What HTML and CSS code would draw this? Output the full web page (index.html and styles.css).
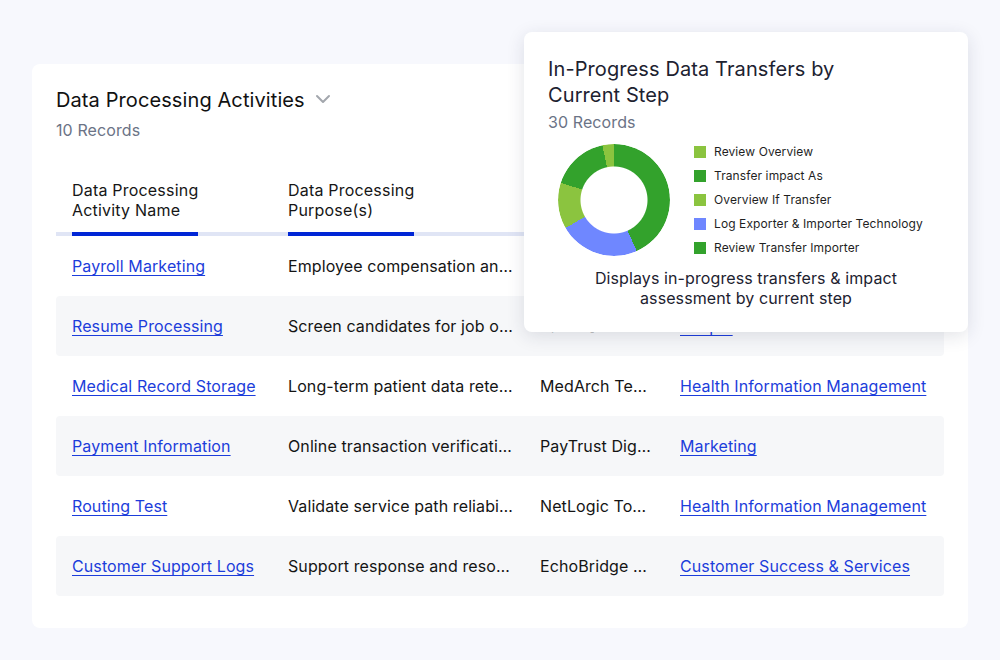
FILE: index.html
```html
<!DOCTYPE html>
<html lang="en">
<head>
  <meta charset="UTF-8">
  <title>Data Processing Activities</title>
  <link rel="stylesheet" href="styles.css">
</head>
<body>

<div class="page">
  <div class="card">
    <div class="card-title">
      <span>Data Processing Activities</span>
      <svg class="chevron" width="16" height="10" viewBox="0 0 16 10"><path d="M2 2 L8 8 L14 2" fill="none" stroke="#a3a7ad" stroke-width="2" stroke-linecap="round" stroke-linejoin="round"/></svg>
    </div>
    <div class="records">10 Records</div>

    <div class="table">
      <div class="row head">
        <div class="cell c1"><span class="th">Data Processing<br>Activity Name</span></div>
        <div class="cell c2"><span class="th">Data Processing<br>Purpose(s)</span></div>
        <div class="cell c3"><span class="th">Vendor(s)</span></div>
        <div class="cell c4"><span class="th">Department(s)</span></div>
      </div>

      <div class="row">
        <div class="cell c1"><a href="#">Payroll Marketing</a></div>
        <div class="cell c2">Employee compensation and benefits</div>
        <div class="cell c3">PayCore Systems</div>
        <div class="cell c4"><a href="#">Human Resources</a></div>
      </div>
      <div class="row striped">
        <div class="cell c1"><a href="#">Resume Processing</a></div>
        <div class="cell c2">Screen candidates for job openings</div>
        <div class="cell c3">TalentSource Inc</div>
        <div class="cell c4"><a href="#">People</a></div>
      </div>
      <div class="row">
        <div class="cell c1"><a href="#">Medical Record Storage</a></div>
        <div class="cell c2">Long-term patient data retention</div>
        <div class="cell c3">MedArch Technologies</div>
        <div class="cell c4"><a href="#">Health Information Management</a></div>
      </div>
      <div class="row striped">
        <div class="cell c1"><a href="#">Payment Information</a></div>
        <div class="cell c2">Online transaction verification</div>
        <div class="cell c3">PayTrust Digital</div>
        <div class="cell c4"><a href="#">Marketing</a></div>
      </div>
      <div class="row">
        <div class="cell c1"><a href="#">Routing Test</a></div>
        <div class="cell c2">Validate service path reliability</div>
        <div class="cell c3">NetLogic Tools</div>
        <div class="cell c4"><a href="#">Health Information Management</a></div>
      </div>
      <div class="row striped">
        <div class="cell c1"><a href="#">Customer Support Logs</a></div>
        <div class="cell c2">Support response and resolution tracking</div>
        <div class="cell c3">EchoBridge Support</div>
        <div class="cell c4"><a href="#">Customer Success &amp; Services</a></div>
      </div>
    </div>
  </div>

  <!-- chart popup over the table -->
  <div class="popup">
    <div class="popup-title">In-Progress Data Transfers by<br>Current Step</div>
    <div class="popup-records">30 Records</div>
    <div class="chart">
      <div class="donut"></div>
      <ul class="legend">
        <li><span class="swatch light"></span>Review Overview</li>
        <li><span class="swatch dark"></span>Transfer impact As</li>
        <li><span class="swatch light"></span>Overview If Transfer</li>
        <li><span class="swatch blue"></span>Log Exporter &amp; Importer Technology</li>
        <li><span class="swatch dark"></span>Review Transfer Importer</li>
      </ul>
    </div>
    <p class="caption">Displays in-progress transfers &amp; impact<br>assessment by current step</p>
  </div>
</div>

</body>
</html>
```

FILE: styles.css
```css
* {
  box-sizing: border-box;
}

body {
  margin: 0;
  background: #f7f8fd;
  font-family: Inter, "Noto Sans", sans-serif;
  letter-spacing: 0.1px;
  color: #141414;
}

.page {
  position: relative;
  width: 1000px;
  height: 660px;
  padding: 64px 32px 32px;
}

.card {
  background: #fff;
  border-radius: 8px;
  height: 564px;
  padding: 24px 24px 32px;
}

.card-title {
  display: flex;
  align-items: center;
  gap: 10px;
  font-size: 20px;
  line-height: 24px;
  color: #111;
}

.chevron {
  margin-top: -2px;
}

.records {
  margin-top: 8px;
  font-size: 16px;
  line-height: 20px;
  color: #6b7386;
}

/* Table */
.table {
  margin-top: 40px;
  width: 888px;
}

.row {
  display: flex;
  height: 60px;
  align-items: center;
  font-size: 16px;
  line-height: 20px;
}

.row.striped {
  background: #f6f7f9;
  border-radius: 4px;
}

.row.head {
  height: auto;
  align-items: stretch;
  border-bottom: 4px solid #e0e5f5;
}

.cell {
  padding: 0 11px 0 16px;
  white-space: nowrap;
  overflow: hidden;
  text-overflow: ellipsis;
}

.head .cell {
  display: flex;
  flex-direction: column;
  overflow: visible;
}

.th {
  align-self: flex-start;
  padding-bottom: 12px;
  margin-bottom: -4px;
  border-bottom: 4px solid #0026d6;
  letter-spacing: 0.2px;
  color: #161616;
}

.c1 { width: 216px; }
.c2 { width: 252px; }
.c3 { width: 140px; }
.c4 { width: 280px; }

.cell a {
  color: #1c3ddb;
  text-decoration: underline;
  text-underline-offset: 3px;
  text-decoration-thickness: 1px;
}

/* Chart popup */
.popup {
  position: absolute;
  left: 524px;
  top: 32px;
  width: 444px;
  height: 300px;
  background: #fff;
  border-radius: 8px;
  box-shadow: 0 4px 18px rgba(30, 40, 70, 0.13);
  padding: 24px;
}

.popup-title {
  font-size: 20px;
  line-height: 26px;
  color: #1d2230;
}

.popup-records {
  margin-top: 4px;
  font-size: 16px;
  line-height: 20px;
  color: #6b7386;
}

.chart {
  display: flex;
  align-items: center;
  gap: 24px;
  margin-top: 8px;
  padding-left: 10px;
}

.donut {
  width: 112px;
  height: 112px;
  border-radius: 50%;
  background: conic-gradient(#33a22c 0deg 156deg, #6f87ff 156deg 240deg, #8bc43f 240deg 288deg, #33a22c 288deg 348deg, #8bc43f 348deg 360deg);
  -webkit-mask: radial-gradient(circle, transparent 33px, #000 34px);
  mask: radial-gradient(circle, transparent 33px, #000 34px);
}

.legend {
  list-style: none;
  margin: 0;
  padding: 0;
  font-size: 12px;
  line-height: 24px;
  color: #1f1f1f;
}

.legend li {
  display: flex;
  align-items: center;
  gap: 8px;
}

.swatch {
  width: 12px;
  height: 12px;
}

.swatch.light { background: #8bc43f; }
.swatch.dark { background: #33a22c; }
.swatch.blue { background: #6f87ff; }

.caption {
  margin: 8px 0 0;
  text-align: center;
  font-size: 16px;
  line-height: 20px;
  color: #1d2230;
}
```
